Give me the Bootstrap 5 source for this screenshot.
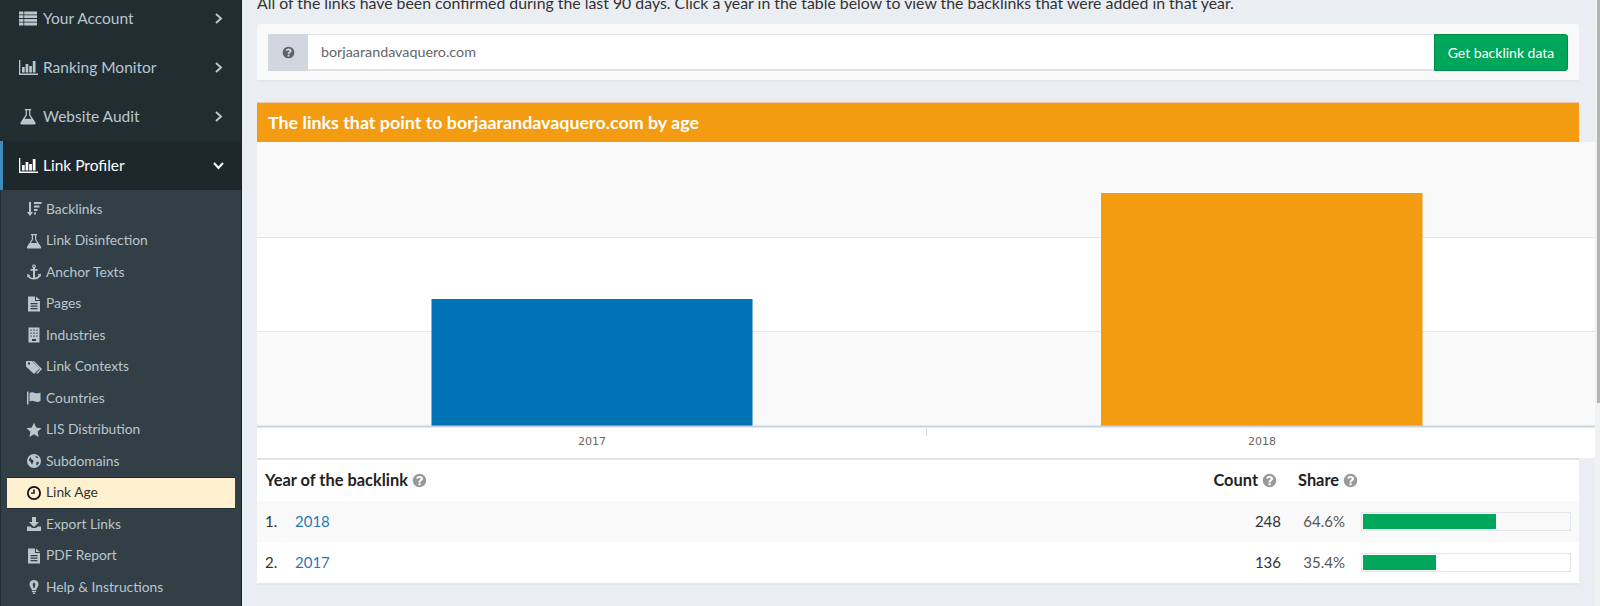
<!DOCTYPE html>
<html lang="en">
<head>
<meta charset="utf-8">
<title>Link Age</title>
<link href="https://cdn.jsdelivr.net/npm/bootstrap@5.3.0/dist/css/bootstrap.min.css" rel="stylesheet">
<style>
html,body{height:606px;overflow:hidden}
body{font-family:"Lato","Noto Sans",sans-serif;background:#eaedf2;color:#333;font-size:15px}
.shell{height:606px}
.side{width:242px;flex:none;background:#222d32;border-right:1px solid #1a2226;height:606px;overflow:hidden}
.top-item{height:49px;flex:none;color:#b8c7ce;font-size:15.5px;padding:0 15px 0 18px;text-decoration:none}
.top-item:first-child{margin-top:-6px}
.top-item .ico{width:20px;height:17px;fill:#b8c7ce;margin-right:5px;flex:none}
.top-item .chev{width:11px;height:11px;fill:none;stroke:#b8c7ce;stroke-width:2;margin-left:auto;margin-right:2px}
.top-item.on{background:#1e282c;color:#fff;border-left:3px solid #3c8dbc;padding-left:15px}
.top-item.on .ico{fill:#fff}
.top-item.on .chev{stroke:#fff;width:13px;height:13px;margin-right:1px}
.sub-list{background:#333f47;height:420px;padding:3.5px 6px 0 6px;border-left:1px solid #222d32}
.sub-item{height:31.5px;flex:none;color:#b8c7ce;font-size:13.8px;padding-left:19px;text-decoration:none}
.sub-item .ico{width:16px;height:16px;fill:#b8c7ce;margin-right:4px;flex:none}
.sub-item.on{background:#fff1d0;color:#333;border:1px solid #1f2a30;border-width:1px 0 1px 0}
.sub-item.on .ico{fill:#111}
.main{flex:1 1 auto;min-width:0;padding:0 16px 0 15px;position:relative}
.intro{margin:-7px 0 0;font-size:15.85px;line-height:20px;height:31px;white-space:nowrap;color:#333}
.search-box{background:#f9f9f9;height:58px;padding:10px 11px;border-radius:3px;border-bottom:2px solid #e4e6ea;margin-bottom:20px}
.search-box .input-group{height:37px;flex-wrap:nowrap}
.q-add{width:41px;background:#d2d6de;border:0;border-radius:0;justify-content:center;padding:0}
.q-add svg{width:13px;height:13px;fill:#5c636a}
.search-box .form-control{border:0;border-top:1px solid #dfe2e8;border-bottom:2px solid #dfe2e8;border-radius:0;font-size:14.3px;color:#666;padding-left:13px;box-shadow:none}
.go-btn{background:#00a65a;border:1px solid #008d4c;color:#fff;font-size:14px;width:134px;padding:0;border-radius:0 3px 3px 0}
.title-bar{background:#f39c12;color:#fff;height:40px;font-size:17.85px;font-weight:700;padding-left:11px;border-top:1px solid #f0c8b0}
.chart-wrap{margin-right:-16px;background:#fff}
.chart-wrap svg{display:block;width:1338px;height:316px}
.chart-wrap text{font-family:"DejaVu Sans",sans-serif;font-size:11px;fill:#666;text-anchor:middle}
.data-panel{background:#fff;border-bottom:2px solid #e4e6ea;border-top:2px solid #e1e3e6}
.data-table{margin:0;font-size:15px;--bs-table-bg:transparent;color:#333}
.data-table>*>*>*{border:0;padding:0 8px;vertical-align:middle}
.data-table thead th{height:40px;font-weight:700;color:#222;font-size:16.4px;white-space:nowrap}
.data-table tbody td{height:41px}
.data-table tbody tr:first-child{background:#f9f9f9}
.data-table a{color:#1f7ab8;text-decoration:none}
.hlp{width:15px;height:15px;fill:#999;vertical-align:-2px}
.data-table thead th.cnt-head{padding-right:12px}
.data-table thead th.shr-head{padding-left:9px}
.num-col{width:30px}
.cnt-col{width:70px}
.shr-col{width:64px;color:#555}
.bar-col{width:226px}
.meter{height:19px;background:transparent;border:1px solid #e4e6ea;border-radius:0;padding:1px}
.meter .progress-bar{background:#00a65a}
.scroll-rail{width:5px;flex:none;background:#f1f1f1;height:606px}
.scroll-rail i{display:block;height:403px;width:3px;margin-left:2px;background:#b4b4b4}
</style>
</head>
<body>
<svg width="0" height="0" class="d-block" aria-hidden="true">
<defs>
<symbol id="i-list" viewBox="0 0 20 17"><path d="M1 1.500h4.400v2.900H1zM6.200 1.500H19v2.900H6.200zM1 5.200h4.400v2.900H1zM6.200 5.200H19v2.900H6.200zM1 8.900h4.400v2.900H1zM6.200 8.900H19v2.900H6.200zM1 12.600h4.400v2.900H1zM6.200 12.600H19v2.900H6.200z"/></symbol>
<symbol id="i-bars" viewBox="0 0 20 17"><path d="M1 1h1.300v13.600H20V16H1zM4 8h2.700v5.600H4zM7.600 5h2.700v8.600H7.600zM11.200 7h2.700v6.600h-2.700zM14.800 2h2.700v11.600h-2.700z"/></symbol>
<symbol id="i-flask" viewBox="0 0 16 16"><path d="M5 1h6v1.200h-.8v4.200l4.800 7.300c.5.800 0 1.800-1 1.800H2c-1 0-1.500-1-1-1.800l4.800-7.300V2.200H5zm2 1.200v4.600L4.800 10h6.400L9 6.800V2.200z" fill-rule="evenodd"/></symbol>
<symbol id="i-sort" viewBox="0 0 16 16"><path d="M3 1h2v10h2l-3 4-3-4h2zM8 1h7.500v2H8zM8 4.500h5.500v2H8zM8 8h3.500v2H8zM8 11.500h2v2H8z"/></symbol>
<symbol id="i-anchor" viewBox="0 0 16 16"><path d="M8 .5a1.900 1.900 0 0 1 1 3.500v1h2.500v1.700H9v6.800c1.800-.2 3-1 3.600-2l-1.100-.8 3.200-1.300.3 3.400-.9-.6C13 14.400 10.800 15.500 8 15.500s-5-1.100-6.100-2.800l-.9.6.3-3.400 3.200 1.300-1.100.8c.6 1 1.800 1.800 3.600 2V6.700H4.500V5H7V4a1.900 1.900 0 0 1 1-3.500zm0 1.100a.7.700 0 1 0 0 1.500.7.700 0 0 0 0-1.500z" fill-rule="evenodd"/></symbol>
<symbol id="i-file" viewBox="0 0 16 16"><path d="M2 .5h7v4.500h5v10.500H2zM10 .5l4 3.500h-4zM4.500 7v1.200h7V7zm0 2.500v1.200h7V9.500zm0 2.500v1.200h7V12z" fill-rule="evenodd"/></symbol>
<symbol id="i-bldg" viewBox="0 0 16 16"><path d="M2.500.5h11v15h-11zM4.500 2.500v1.200h1.200V2.500zm2.800 0v1.200h1.400V2.500zm3 0v1.200h1.200V2.500zm-5.800 3v1.200h1.200V5.500zm2.800 0v1.200h1.400V5.500zm3 0v1.200h1.200V5.500zm-5.800 3v1.200h1.200V8.500zm2.800 0v1.200h1.400V8.500zm3 0v1.200h1.200V8.500zM6 12v2h4v-2z" fill-rule="evenodd"/></symbol>
<symbol id="i-tags" viewBox="0 0 16 16"><path d="M0 2h6l7.500 7.500-5.500 5.500L0 7.500zm3 1.200a1.200 1.200 0 1 0 0 2.400 1.200 1.200 0 0 0 0-2.400zM8 2l8 8-4.600 5-1-1 3.600-4-7.300-8z" fill-rule="evenodd"/></symbol>
<symbol id="i-flag" viewBox="0 0 16 16"><path d="M1 1.500h1.500v13H1zM3.500 3c2-1.300 3.500-.8 5.500 0 1.800.6 3.500.4 5.500-.5v8.500c-2 1.200-3.700 1.200-5.500.5-2-.8-3.500-1-5.500 0z"/></symbol>
<symbol id="i-star" viewBox="0 0 16 16"><path d="M8 .8l2.200 4.800 5.300.6-3.900 3.500 1 5.200L8 12.300l-4.600 2.600 1-5.200L.5 6.200l5.300-.6z"/></symbol>
<symbol id="i-globe" viewBox="0 0 16 16"><path d="M8 1a7 7 0 1 1 0 14A7 7 0 0 1 8 1zM4.500 4c-.8 1-1.500 2.200-1.500 3.500.8.700 1.700 1 2 2.200.3 1 .8 1.500 1.500 1.500 0-1.500 1-2 1-3.200S6 6.800 5.500 6.200 5 4.800 4.500 4zM9.500 3c-.3.800.3 1.500 1 1.800.8.400 1.300 0 2-.3C12 4 10.800 3 9.500 3zM11 8.500c-.8 1-1 2.500-.5 4 1-.5 2-1.500 2.500-3-.7-.3-1.300-.7-2-1z" fill-rule="evenodd"/></symbol>
<symbol id="i-clock" viewBox="0 0 16 16"><path d="M8 1a7 7 0 1 1 0 14A7 7 0 0 1 8 1zm0 1.800a5.200 5.200 0 1 0 0 10.400A5.200 5.200 0 0 0 8 2.800zM7.200 4.500h1.500v4.300H5V7.400h2.200z" fill-rule="evenodd"/></symbol>
<symbol id="i-down" viewBox="0 0 16 16"><path d="M6 1h4v5h3l-5 5-5-5h3zM1 10.500h3.500L6 12h4l1.500-1.500H15V15H1z"/></symbol>
<symbol id="i-bulb" viewBox="0 0 16 16"><path d="M8 1a4.600 4.600 0 0 1 3.200 7.900c-.7.700-1 1.400-1 2.100H5.800c0-.7-.3-1.400-1-2.100A4.600 4.600 0 0 1 8 1zm0 2.300L6.600 5.100 7.400 9h1.200l.8-3.900zM5.900 11.800h4.200V13H5.900zM6.500 13.600h3L8.800 15H7.200z" fill-rule="evenodd"/></symbol>
<symbol id="i-help" viewBox="0 0 16 16"><path d="M8 .8a7.200 7.200 0 1 1 0 14.400A7.200 7.200 0 0 1 8 .8zM7 11v2h2.200v-2zM8.100 3.200C6.300 3.200 5 4.100 4.500 5.500l1.700.8c.3-.8.900-1.200 1.800-1.200.8 0 1.300.4 1.300 1 0 .5-.4.800-1.100 1.300C7.500 7.900 7 8.500 7 9.600v.5h2.200v-.4c0-.5.300-.8 1-1.300.9-.6 1.500-1.300 1.500-2.400 0-1.700-1.500-2.800-3.600-2.800z" fill-rule="evenodd"/></symbol>
</defs>
</svg>
<div class="shell d-flex">
  <nav class="side d-flex flex-column">
    <a class="top-item d-flex align-items-center" href="#"><svg class="ico"><use href="#i-list"/></svg>Your Account<svg class="chev" viewBox="0 0 11 11"><path d="M3 1l5 4.500L3 10"/></svg></a>
    <a class="top-item d-flex align-items-center" href="#"><svg class="ico"><use href="#i-bars"/></svg>Ranking Monitor<svg class="chev" viewBox="0 0 11 11"><path d="M3 1l5 4.500L3 10"/></svg></a>
    <a class="top-item d-flex align-items-center" href="#"><svg class="ico"><use href="#i-flask"/></svg>Website Audit<svg class="chev" viewBox="0 0 11 11"><path d="M3 1l5 4.500L3 10"/></svg></a>
    <a class="top-item on d-flex align-items-center" href="#"><svg class="ico"><use href="#i-bars"/></svg>Link Profiler<svg class="chev" viewBox="0 0 13 13"><path d="M2 4l4.500 5L11 4"/></svg></a>
    <div class="sub-list d-flex flex-column">
      <a class="sub-item d-flex align-items-center" href="#"><svg class="ico"><use href="#i-sort"/></svg>Backlinks</a>
      <a class="sub-item d-flex align-items-center" href="#"><svg class="ico"><use href="#i-flask"/></svg>Link Disinfection</a>
      <a class="sub-item d-flex align-items-center" href="#"><svg class="ico"><use href="#i-anchor"/></svg>Anchor Texts</a>
      <a class="sub-item d-flex align-items-center" href="#"><svg class="ico"><use href="#i-file"/></svg>Pages</a>
      <a class="sub-item d-flex align-items-center" href="#"><svg class="ico"><use href="#i-bldg"/></svg>Industries</a>
      <a class="sub-item d-flex align-items-center" href="#"><svg class="ico"><use href="#i-tags"/></svg>Link Contexts</a>
      <a class="sub-item d-flex align-items-center" href="#"><svg class="ico"><use href="#i-flag"/></svg>Countries</a>
      <a class="sub-item d-flex align-items-center" href="#"><svg class="ico"><use href="#i-star"/></svg>LIS Distribution</a>
      <a class="sub-item d-flex align-items-center" href="#"><svg class="ico"><use href="#i-globe"/></svg>Subdomains</a>
      <a class="sub-item on d-flex align-items-center" href="#"><svg class="ico"><use href="#i-clock"/></svg>Link Age</a>
      <a class="sub-item d-flex align-items-center" href="#"><svg class="ico"><use href="#i-down"/></svg>Export Links</a>
      <a class="sub-item d-flex align-items-center" href="#"><svg class="ico"><use href="#i-file"/></svg>PDF Report</a>
      <a class="sub-item d-flex align-items-center" href="#"><svg class="ico"><use href="#i-bulb"/></svg>Help &amp; Instructions</a>
    </div>
  </nav>
  <main class="main">
    <p class="intro">All of the links have been confirmed during the last 90 days. Click a year in the table below to view the backlinks that were added in that year.</p>
    <div class="search-box">
      <div class="input-group">
        <span class="input-group-text q-add"><svg viewBox="0 0 16 16"><use href="#i-help"/></svg></span>
        <input class="form-control" type="text" value="borjaarandavaquero.com" aria-label="Domain">
        <button class="btn go-btn" type="button">Get backlink data</button>
      </div>
    </div>
    <div class="title-bar d-flex align-items-center">The links that point to borjaarandavaquero.com by age</div>
    <div class="chart-wrap">
      <svg viewBox="0 0 1338 316">
        <rect width="1338" height="95" fill="#f9f9f9"/>
        <rect y="189" width="1338" height="95" fill="#f9f9f9"/>
        <path d="M0 95.500H1338M0 189.500H1338" stroke="#e3e5e8"/>
        <rect x="174.500" y="157" width="321" height="127" fill="#0073b7"/>
        <rect x="844" y="51" width="321.500" height="233" fill="#f39c12"/>
        <path d="M0 284.500H1338" stroke="#c6d3e0" stroke-width="2"/>
        <path d="M669.500 285V294" stroke="#d5dfe9"/>
        <text x="335" y="303">2017</text>
        <text x="1005" y="303">2018</text>
      </svg>
    </div>
    <div class="data-panel">
      <table class="table data-table">
        <thead>
          <tr>
            <th colspan="2">Year of the backlink <svg class="hlp"><use href="#i-help"/></svg></th>
            <th class="text-end cnt-head">Count <svg class="hlp"><use href="#i-help"/></svg></th>
            <th class="shr-head" colspan="2">Share <svg class="hlp"><use href="#i-help"/></svg></th>
          </tr>
        </thead>
        <tbody>
          <tr>
            <td class="num-col">1.</td><td><a href="#">2018</a></td><td class="cnt-col text-end">248</td><td class="shr-col text-end">64.6%</td>
            <td class="bar-col"><div class="progress meter"><div class="progress-bar" style="width:64.6%"></div></div></td>
          </tr>
          <tr>
            <td class="num-col">2.</td><td><a href="#">2017</a></td><td class="cnt-col text-end">136</td><td class="shr-col text-end">35.4%</td>
            <td class="bar-col"><div class="progress meter"><div class="progress-bar" style="width:35.4%"></div></div></td>
          </tr>
        </tbody>
      </table>
    </div>
  </main>
  <div class="scroll-rail"><i></i></div>
</div>
<script src="https://cdn.jsdelivr.net/npm/bootstrap@5.3.0/dist/js/bootstrap.bundle.min.js"></script>
</body>
</html>
